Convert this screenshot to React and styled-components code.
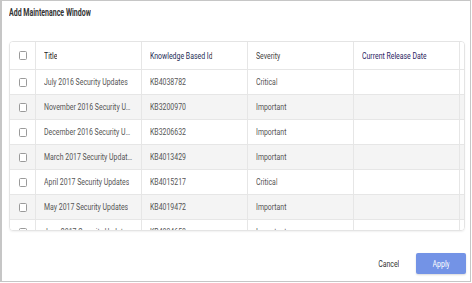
import React from "react";
import styled, { createGlobalStyle } from "styled-components";

const GlobalStyle = createGlobalStyle`
  body {
    margin: 0;
    background: #ffffff;
    font-family: "Roboto", "Liberation Sans", sans-serif;
  }
`;

// the source UI uses a condensed face; Roboto is narrowed to match its widths
const Narrow = styled.span`
  display: inline-block;
  flex-shrink: 0;
  transform: scaleX(${(p) => p.$scale || 0.77});
  transform-origin: ${(p) => (p.$center ? "center" : "left")} center;
  white-space: nowrap;
  overflow: hidden;
  text-overflow: ellipsis;
  max-width: ${(p) => (p.$max ? `${p.$max}px` : "none")};
`;

const Dialog = styled.div`
  box-sizing: border-box;
  width: 471px;
  height: 282px;
  border: 1px solid #c6c6c6;
  border-left-width: 2px;
  padding: 0 4px 0 7px;
  display: flex;
  flex-direction: column;
  background: #fff;
`;

const TitleBar = styled.div`
  height: 40px;
  padding-top: 6px;
  box-sizing: border-box;
  font-size: 10px;
  font-weight: bold;
  color: #333;
  line-height: 12px;
`;

const TableCard = styled.div`
  width: 456px;
  height: 190px;
  box-sizing: border-box;
  border: 1px solid #e4e4e4;
  border-radius: 4px;
  box-shadow: 0 1px 2px rgba(0, 0, 0, 0.06);
  overflow: hidden;
`;

const Row = styled.div`
  display: grid;
  grid-template-columns: 26px 106px 106px 106px 106px 1fr;
  height: ${(p) => (p.$header ? "28px" : "25px")};
  background: ${(p) => (p.$shaded ? "#f4f4f4" : "#fff")};
  border-bottom: 1px solid #e6e6e6;
  box-sizing: border-box;
`;

const Cell = styled.div`
  display: flex;
  align-items: center;
  padding: 0 8px;
  border-right: 1px solid #e6e6e6;
  font-size: 9px;
  color: ${(p) => p.$color || "#555"};
  white-space: nowrap;
  overflow: hidden;
  min-width: 0;
  &:last-child {
    border-right: none;
  }
`;

const CheckCell = styled.div`
  display: flex;
  align-items: center;
  justify-content: center;
  border-right: 1px solid #e6e6e6;
`;

const Checkbox = styled.span`
  width: 6px;
  height: 7px;
  border: 1px solid #9a9a9a;
  border-radius: 1.5px;
  background: #fff;
`;

const Footer = styled.div`
  flex: 1;
  display: flex;
  justify-content: flex-end;
  align-items: flex-start;
  padding-top: 22px;
  gap: 14px;
`;

const Button = styled.button`
  height: 21px;
  border: none;
  border-radius: 2px;
  font-family: inherit;
  font-size: 9px;
  cursor: pointer;
  padding: 0;
  display: flex;
  align-items: center;
  justify-content: center;
  width: ${(p) => (p.$primary ? "50px" : "26px")};
  background: ${(p) => (p.$primary ? "#7393e6" : "transparent")};
  color: ${(p) => (p.$primary ? "#fff" : "#333")};
  box-shadow: ${(p) => (p.$primary ? "0 1px 2px rgba(0,0,0,0.15)" : "none")};
`;

const rows = [
  ["July 2016 Security Updates", "KB4038782", "Critical"],
  ["November 2016 Security Updates", "KB3200970", "Important"],
  ["December 2016 Security Updates", "KB3206632", "Important"],
  ["March 2017 Security Updates", "KB4013429", "Important"],
  ["April 2017 Security Updates", "KB4015217", "Critical"],
  ["May 2017 Security Updates", "KB4019472", "Important"],
  ["June 2017 Security Updates", "KB4034658", "Important"],
];

const App = () => {
  return (
    <>
      <GlobalStyle />
      <Dialog>
        <TitleBar>
          <Narrow $scale={0.7}>Add Maintenance Window</Narrow>
        </TitleBar>
        <TableCard>
          <Row $header>
            <CheckCell>
              <Checkbox />
            </CheckCell>
            <Cell $color="#222">
              <Narrow>Title</Narrow>
            </Cell>
            <Cell $color="#1d2c55">
              <Narrow>Knowledge Based Id</Narrow>
            </Cell>
            <Cell $color="#444">
              <Narrow>Severity</Narrow>
            </Cell>
            <Cell $color="#2a2462">
              <Narrow>Current Release Date</Narrow>
            </Cell>
            <Cell />
          </Row>
          {rows.map((r, i) => (
            <Row key={r[1]} $shaded={i % 2 === 1}>
              <CheckCell>
                <Checkbox />
              </CheckCell>
              <Cell>
                <Narrow $max={116}>{r[0]}</Narrow>
              </Cell>
              <Cell>
                <Narrow>{r[1]}</Narrow>
              </Cell>
              <Cell>
                <Narrow>{r[2]}</Narrow>
              </Cell>
              <Cell />
              <Cell />
            </Row>
          ))}
        </TableCard>
        <Footer>
          <Button>
            <Narrow $center>Cancel</Narrow>
          </Button>
          <Button $primary>
            <Narrow $center>Apply</Narrow>
          </Button>
        </Footer>
      </Dialog>
    </>
  );
};

export default App;
